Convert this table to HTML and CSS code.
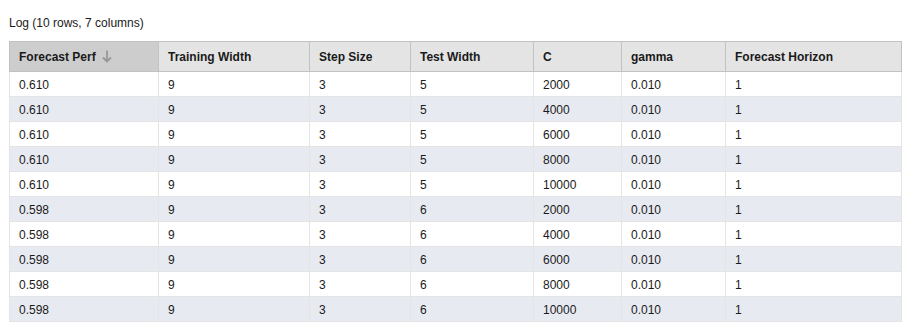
FILE: index.html
```html
<!DOCTYPE html>
<html lang="en">
<head>
    <meta charset="UTF-8">
    <title>Log</title>
    <link rel="stylesheet" href="styles.css">
</head>
<body>
    <div class="caption">Log (10 rows, 7 columns)</div>
    <table class="log-table">
        <colgroup>
            <col style="width: 149px">
            <col style="width: 151px">
            <col style="width: 101px">
            <col style="width: 123px">
            <col style="width: 88px">
            <col style="width: 104px">
            <col style="width: 176px">
        </colgroup>
        <thead>
            <tr>
                <th class="sorted">Forecast Perf
                    <svg class="sort-icon" width="10" height="13" viewBox="0 0 10 13"><path d="M5 0.5V11.5M1 7.5L5 11.5L9 7.5" fill="none" stroke="#979797" stroke-width="1.8"/></svg>
                </th>
                <th>Training Width</th>
                <th>Step Size</th>
                <th>Test Width</th>
                <th>C</th>
                <th>gamma</th>
                <th>Forecast Horizon</th>
            </tr>
        </thead>
        <tbody>
            <tr><td>0.610</td><td>9</td><td>3</td><td>5</td><td>2000</td><td>0.010</td><td>1</td></tr>
            <tr><td>0.610</td><td>9</td><td>3</td><td>5</td><td>4000</td><td>0.010</td><td>1</td></tr>
            <tr><td>0.610</td><td>9</td><td>3</td><td>5</td><td>6000</td><td>0.010</td><td>1</td></tr>
            <tr><td>0.610</td><td>9</td><td>3</td><td>5</td><td>8000</td><td>0.010</td><td>1</td></tr>
            <tr><td>0.610</td><td>9</td><td>3</td><td>5</td><td>10000</td><td>0.010</td><td>1</td></tr>
            <tr><td>0.598</td><td>9</td><td>3</td><td>6</td><td>2000</td><td>0.010</td><td>1</td></tr>
            <tr><td>0.598</td><td>9</td><td>3</td><td>6</td><td>4000</td><td>0.010</td><td>1</td></tr>
            <tr><td>0.598</td><td>9</td><td>3</td><td>6</td><td>6000</td><td>0.010</td><td>1</td></tr>
            <tr><td>0.598</td><td>9</td><td>3</td><td>6</td><td>8000</td><td>0.010</td><td>1</td></tr>
            <tr><td>0.598</td><td>9</td><td>3</td><td>6</td><td>10000</td><td>0.010</td><td>1</td></tr>
        </tbody>
    </table>
</body>
</html>
```

FILE: styles.css
```css
body {
    font-family: 'Liberation Sans', Arial, sans-serif;
    font-size: 12px;
    color: #1a1a1a;
    margin: 0;
    padding: 16px 0 0 9px;
    background-color: #fff;
}
.caption {
    line-height: 14px;
    margin-bottom: 11px;
}
.log-table {
    border-collapse: collapse;
    table-layout: fixed;
    width: 893px;
}
.log-table th {
    height: 28px;
    padding: 1px 0 0 9px;
    text-align: left;
    font-weight: bold;
    background-color: #e4e4e4;
    border: 1px solid #c2c2c2;
    vertical-align: middle;
}
.log-table th.sorted {
    background-color: #cdcdcd;
}
.sort-icon {
    margin-left: 3px;
    vertical-align: -2px;
}
.log-table td {
    height: 23px;
    padding: 1px 0 0 9px;
    border: 1px solid #e4e4e4;
    border-top: none;
    vertical-align: middle;
}
.log-table tbody tr:nth-child(even) td {
    background-color: #e8eaf2;
}
```
